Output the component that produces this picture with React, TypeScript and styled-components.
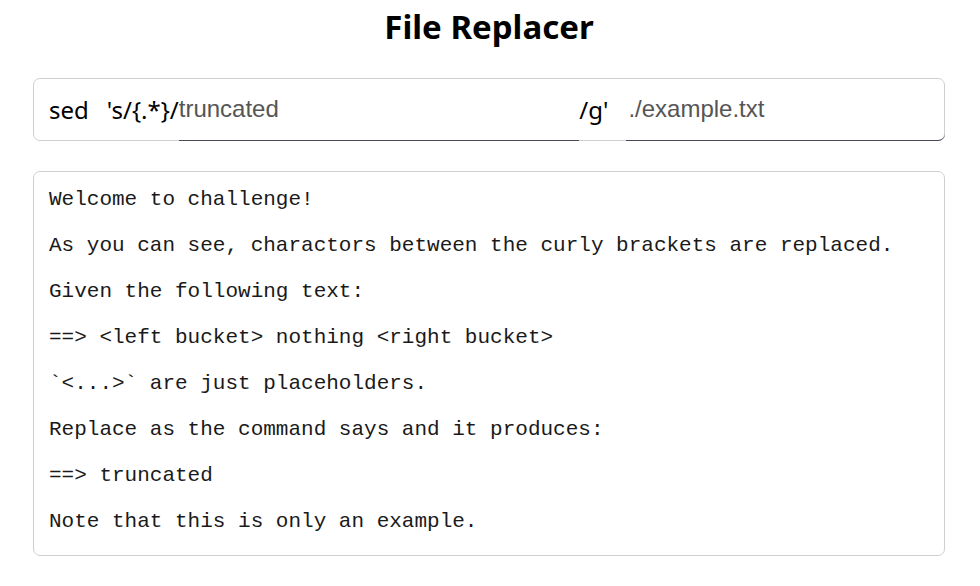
import React from 'react';
import styled, { createGlobalStyle } from 'styled-components';

const GlobalStyle = createGlobalStyle`
  body {
    margin: 0;
    background: #fff;
    font-family: "Noto Sans", "Open Sans", sans-serif;
    color: #000;
  }
`;

const Page = styled.div`
  padding: 0 35px 0 33px;
  display: flex;
  flex-direction: column;
`;

const Title = styled.h1`
  margin: 6px 0 0;
  height: 72px;
  text-align: center;
  font-size: 33px;
  font-weight: 700;
  line-height: 42px;
`;

const CommandGroup = styled.div`
  display: flex;
  align-items: stretch;
  height: 61px;
  border: 1px solid #cfcfcf;
  border-radius: 7px;
  padding-left: 15px;
`;

const Token = styled.span<{ $gap?: number }>`
  display: flex;
  align-items: center;
  font-size: 24px;
  color: #000;
  margin-right: ${p => p.$gap ?? 0}px;
  white-space: pre;
`;

const Field = styled.input<{ $grow: number; $last?: boolean }>`
  flex: ${p => p.$grow} 1 0;
  min-width: 0;
  border: none;
  border-bottom: 1px solid #4b4b55;
  margin-bottom: -1px;
  margin-right: ${p => (p.$last ? '-1px' : '0')};
  border-bottom-right-radius: ${p => (p.$last ? '7px' : '0')};
  background: transparent;
  padding: 0 0 1px ${p => (p.$last ? '2px' : '0')};
  font-family: "Liberation Sans", Arial, sans-serif;
  font-size: 24px;
  color: #555;
  outline: none;
`;

const Output = styled.div`
  margin-top: 30px;
  border: 1px solid #cfcfcf;
  border-radius: 7px;
  padding: 15px 15px 0;
  font-family: "Liberation Mono", "Courier New", monospace;
  font-size: 21px;
  color: #1a1a1a;
`;

const Line = styled.p`
  margin: 0 0 20px;
  line-height: 26px;
  white-space: pre;
`;

const lines = [
  'Welcome to challenge!',
  'As you can see, charactors between the curly brackets are replaced.',
  'Given the following text:',
  '==> <left bucket> nothing <right bucket>',
  '`<...>` are just placeholders.',
  'Replace as the command says and it produces:',
  '==> truncated',
  'Note that this is only an example.',
];

export default function App() {
  return (
    <>
      <GlobalStyle />
      <Page>
        <Title>File Replacer</Title>
        <CommandGroup>
          <Token $gap={18}>sed</Token>
          <Token>'s/{'{'}.*{'}'}/</Token>
          <Field $grow={401} defaultValue="truncated" />
          <Token $gap={18}>/g'</Token>
          <Field $grow={317} $last defaultValue="./example.txt" />
        </CommandGroup>
        <Output>
          {lines.map((l, i) => (
            <Line key={i}>{l}</Line>
          ))}
        </Output>
      </Page>
    </>
  );
}
